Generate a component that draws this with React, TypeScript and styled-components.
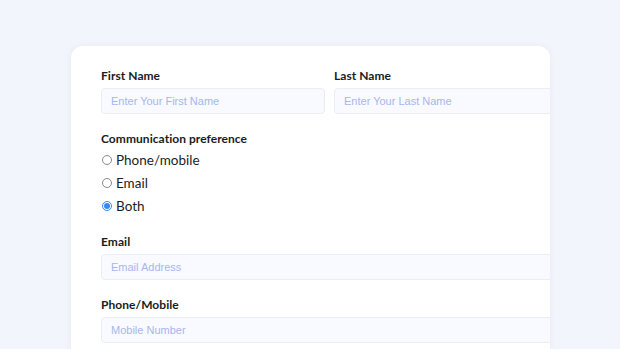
import React from "react";
import styled, { createGlobalStyle } from "styled-components";

const Global = createGlobalStyle`
  html, body { margin: 0; padding: 0; }
  body {
    background: #f3f5fc;
    width: 620px;
    height: 349px;
    overflow: hidden;
    font-family: "Lato", "Noto Sans", sans-serif;
  }
`;

const Page = styled.div`
  padding: 46px 0 0 71px;
  height: 349px;
  box-sizing: border-box;
  overflow: hidden;
`;

const Card = styled.form`
  width: 479px;
  height: 330px;
  background: #ffffff;
  border-radius: 12px 12px 0 0;
  box-shadow: 0 0 6px rgba(200, 208, 232, 0.25);
  overflow: hidden;
  padding: 22px 0 0 30px;
  box-sizing: border-box;
  display: flex;
  flex-direction: column;
`;

const NameRow = styled.div`
  display: grid;
  grid-template-columns: 224px 224px;
  column-gap: 9px;
`;

const Field = styled.div<{ $mt?: number }>`
  display: flex;
  flex-direction: column;
  gap: 5px;
  margin-top: ${(p) => p.$mt ?? 0}px;
`;

const Label = styled.label`
  font-family: "Lato", "Noto Sans", sans-serif;
  font-weight: 700;
  font-size: 12px;
  line-height: 15px;
  color: #1a1c21;
  letter-spacing: 0.05px;
`;

const Input = styled.input<{ $w?: number }>`
  box-sizing: border-box;
  width: ${(p) => p.$w ?? 224}px;
  height: 26px;
  background: #f8faff;
  border: 1px solid #e9edf5;
  border-radius: 4px;
  padding: 0 9px;
  font-family: "Liberation Sans", Arial, sans-serif;
  font-size: 11px;
  color: #333;
  outline: none;
  &::placeholder {
    color: #a8b5ee;
  }
`;

const Group = styled.div`
  display: flex;
  flex-direction: column;
  margin-top: 17px;
`;

const RadioList = styled.div`
  display: flex;
  flex-direction: column;
  margin-top: 2px;
`;

const RadioRow = styled.label`
  display: flex;
  align-items: center;
  height: 23px;
  gap: 4px;
  font-family: "Lato", "Noto Sans", sans-serif;
  font-size: 13.5px;
  color: #1b1d22;
`;

const Radio = styled.input`
  margin: 0 0 0 1px;
  width: 10px;
  height: 10px;
  accent-color: #1a73e8;
  opacity: 0.85;
`;

export default function App() {
  return (
    <>
      <Global />
      <Page>
        <Card onSubmit={(e) => e.preventDefault()}>
          <NameRow>
            <Field>
              <Label>First Name</Label>
              <Input placeholder="Enter Your First Name" />
            </Field>
            <Field>
              <Label>Last Name</Label>
              <Input placeholder="Enter Your Last Name" />
            </Field>
          </NameRow>
          <Group>
            <Label>Communication preference</Label>
            <RadioList>
              <RadioRow>
                <Radio type="radio" name="pref" />
                Phone/mobile
              </RadioRow>
              <RadioRow>
                <Radio type="radio" name="pref" />
                Email
              </RadioRow>
              <RadioRow>
                <Radio type="radio" name="pref" defaultChecked />
                Both
              </RadioRow>
            </RadioList>
          </Group>
          <Field $mt={17}>
            <Label>Email</Label>
            <Input $w={470} placeholder="Email Address" />
          </Field>
          <Field $mt={17}>
            <Label>Phone/Mobile</Label>
            <Input $w={470} placeholder="Mobile Number" />
          </Field>
        </Card>
      </Page>
    </>
  );
}
